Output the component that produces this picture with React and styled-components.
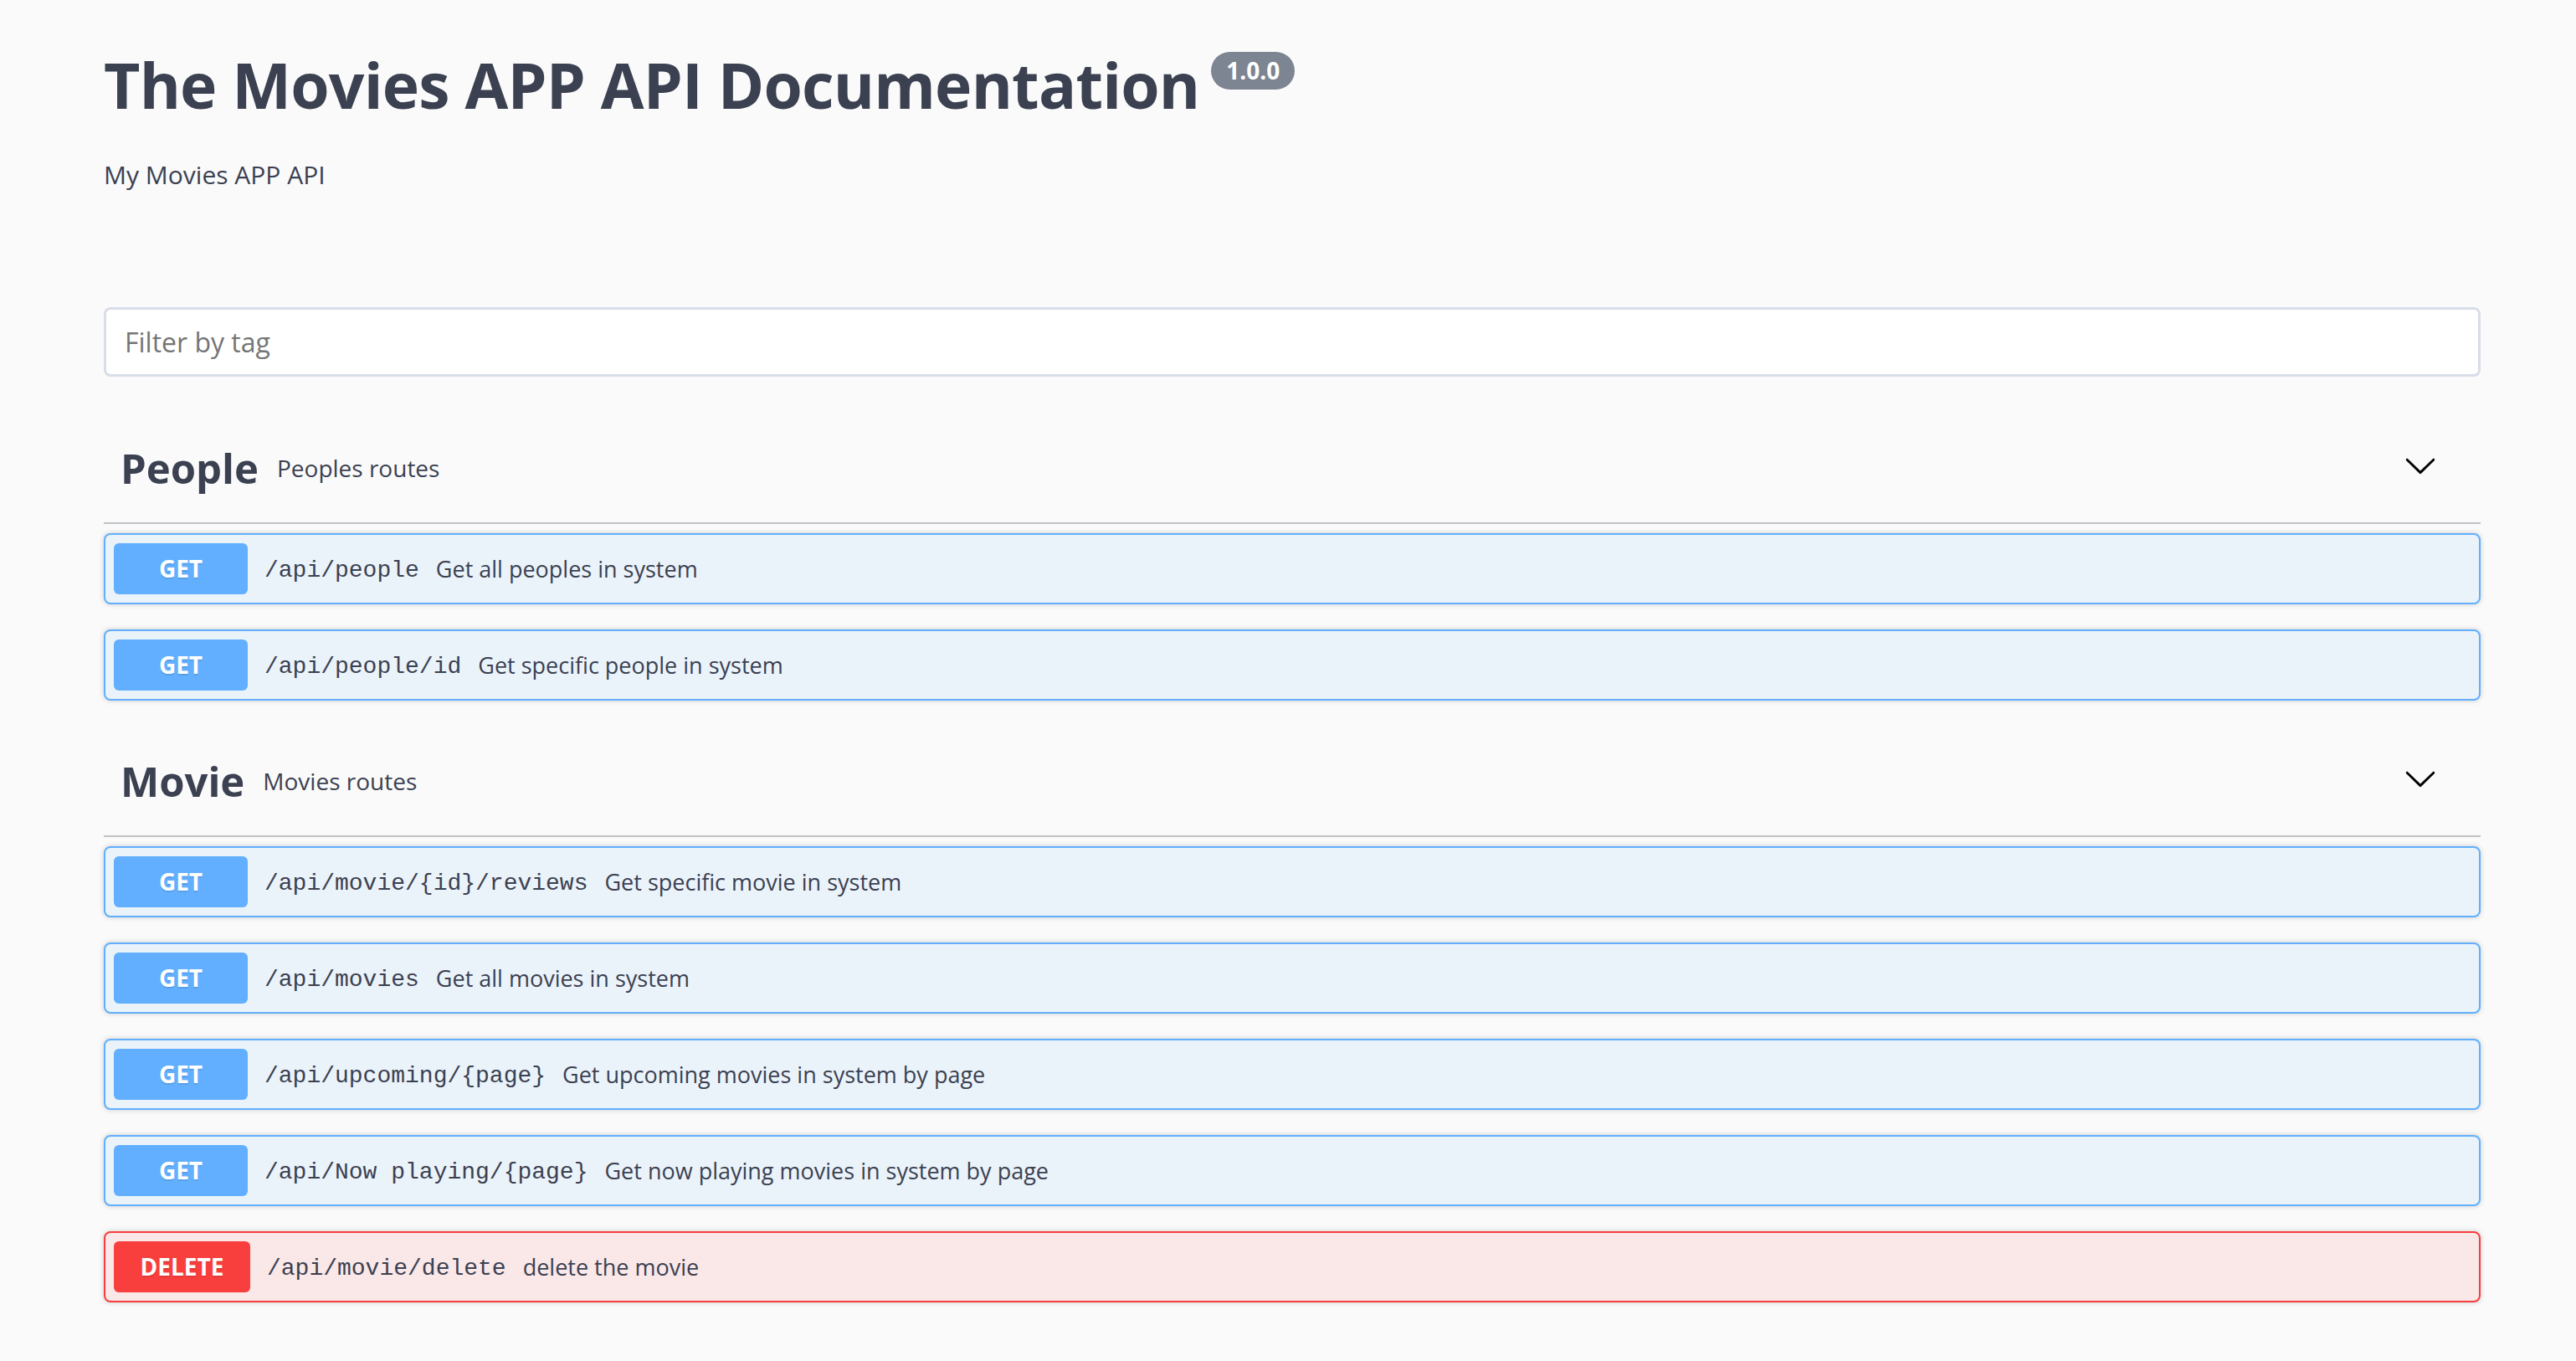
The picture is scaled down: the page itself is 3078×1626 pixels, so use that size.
import React from "react";
import styled, { createGlobalStyle } from "styled-components";

const GlobalStyle = createGlobalStyle`
  html, body {
    margin: 0;
    padding: 0;
    background: #fafafa;
  }
  body {
    font-family: "Open Sans", "Noto Sans", sans-serif;
    color: #3b4151;
  }
  * { box-sizing: border-box; }
`;

const Page = styled.div`
  width: 2840px;
  margin-left: 124px;
  padding-top: 56px;
  padding-bottom: 60px;
`;

const Title = styled.h2`
  margin: 0;
  display: flex;
  align-items: flex-start;
  font-size: 75px;
  line-height: 90px;
  font-weight: 700;
  color: #3b4151;
  letter-spacing: -0.8px;
`;

const Version = styled.span`
  display: inline-block;
  margin: 6px 0 0 14px;
  height: 45px;
  padding: 0 18px;
  border-radius: 23px;
  background: #7d8492;
  color: #fff;
  font-size: 28px;
  line-height: 45px;
  font-weight: 700;
  letter-spacing: 0;
`;

const Subtitle = styled.p`
  margin: 43px 0 0;
  font-size: 30px;
  line-height: 40px;
  color: #3b4151;
`;

const Filter = styled.input`
  display: block;
  width: 100%;
  height: 83px;
  margin: 138px 0 0;
  padding: 0 22px;
  border: 3px solid #d8dde7;
  border-radius: 8px;
  background: #fff;
  font-family: "Open Sans", sans-serif;
  font-size: 32px;
  color: #3b4151;
  outline: none;
  &::placeholder {
    color: #757575;
  }
`;

const Sections = styled.div`
  margin-top: 43px;
`;

const TagHeading = styled.div`
  display: flex;
  align-items: center;
  height: 133px;
  padding: 0 52px 0 20px;
  border-bottom: 2px solid rgba(59, 65, 81, 0.3);
  margin-bottom: 11px;
`;

const TagName = styled.span`
  font-size: 49px;
  font-weight: 700;
  color: #3b4151;
`;

const TagDesc = styled.small`
  flex: 1;
  padding: 0 22px;
  font-size: 28px;
  color: #3b4151;
`;

const Arrow = styled.svg`
  width: 40px;
  height: 40px;
  margin-top: -5px;
  fill: #000;
`;

const methodColors = {
  GET: { main: "#61affe", bg: "#ebf3fa" },
  DELETE: { main: "#f93e3e", bg: "#fae7e7" },
};

const Op = styled.div`
  display: flex;
  align-items: center;
  padding: 10px;
  margin-bottom: 30px;
  border: 2px solid ${(p) => methodColors[p.$method].main};
  border-radius: 8px;
  background: ${(p) => methodColors[p.$method].bg};
  box-shadow: 0 0 6px rgba(0, 0, 0, 0.19);
`;

const Method = styled.span`
  display: inline-block;
  width: ${(p) => (p.$method === "DELETE" ? "163px" : "160px")};
  padding: 12px 0;
  border-radius: 6px;
  background: ${(p) => methodColors[p.$method].main};
  color: #fff;
  font-size: 28px;
  line-height: 37px;
  font-weight: 700;
  text-align: center;
  text-shadow: 0 2px 0 rgba(0, 0, 0, 0.1);
`;

const Path = styled.span`
  padding: 4px 20px 0;
  font-family: "Liberation Mono", "DejaVu Sans Mono", monospace;
  font-size: 28px;
  color: #3b4151;
  white-space: pre;
`;

const Desc = styled.span`
  font-size: 27px;
  color: #3b4151;
`;

const sections = [
  {
    name: "People",
    desc: "Peoples routes",
    ops: [
      { method: "GET", path: "/api/people", desc: "Get all peoples in system" },
      { method: "GET", path: "/api/people/id", desc: "Get specific people in system" },
    ],
  },
  {
    name: "Movie",
    desc: "Movies routes",
    ops: [
      { method: "GET", path: "/api/movie/{id}/reviews", desc: "Get specific movie in system" },
      { method: "GET", path: "/api/movies", desc: "Get all movies in system" },
      { method: "GET", path: "/api/upcoming/{page}", desc: "Get upcoming movies in system by page" },
      { method: "GET", path: "/api/Now playing/{page}", desc: "Get now playing movies in system by page" },
      { method: "DELETE", path: "/api/movie/delete", desc: "delete the movie" },
    ],
  },
];

export default function App() {
  return (
    <>
      <GlobalStyle />
      <Page>
        <Title>
          The Movies APP API Documentation
          <Version>1.0.0</Version>
        </Title>
        <Subtitle>My Movies APP API</Subtitle>
        <Filter placeholder="Filter by tag" />
        <Sections>
          {sections.map((s) => (
            <section key={s.name}>
              <TagHeading>
                <TagName>{s.name}</TagName>
                <TagDesc>{s.desc}</TagDesc>
                <Arrow viewBox="0 0 20 20">
                  <path d="M17.418 6.109c.272-.268.709-.268.979 0s.271.701 0 .969l-7.908 7.83c-.27.268-.707.268-.979 0l-7.908-7.83c-.27-.268-.27-.701 0-.969.271-.268.709-.268.979 0L10 13.25l7.418-7.141z" />
                </Arrow>
              </TagHeading>
              {s.ops.map((o) => (
                <Op key={o.path} $method={o.method}>
                  <Method $method={o.method}>{o.method}</Method>
                  <Path>{o.path}</Path>
                  <Desc>{o.desc}</Desc>
                </Op>
              ))}
            </section>
          ))}
        </Sections>
      </Page>
    </>
  );
}
